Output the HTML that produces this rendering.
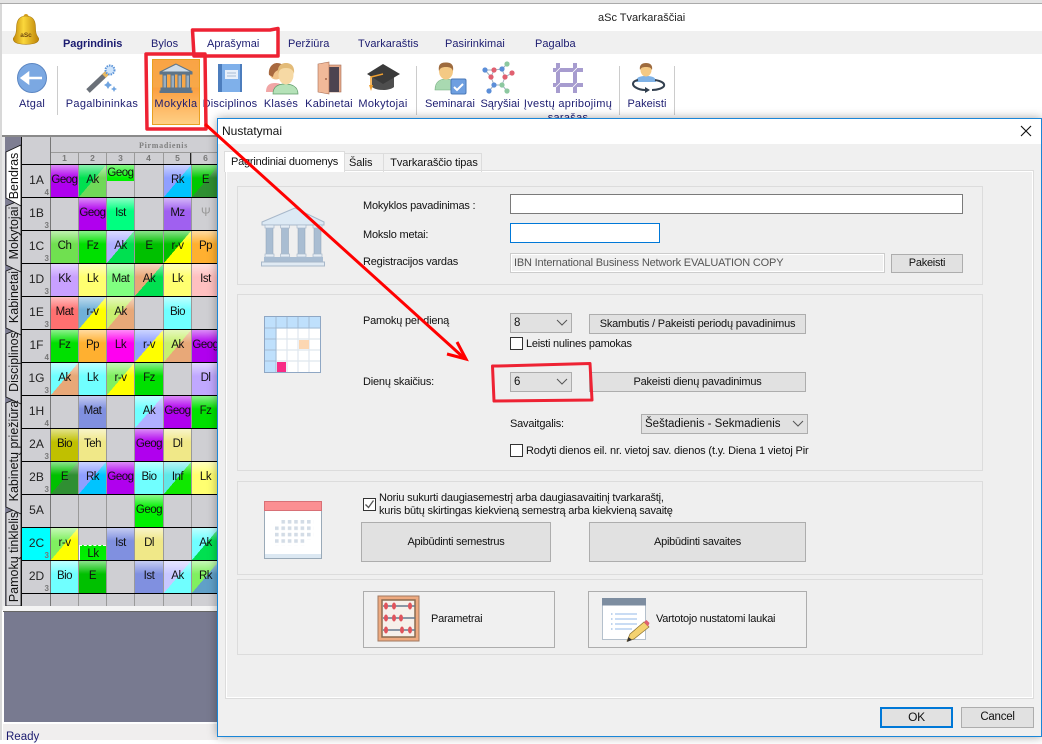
<!DOCTYPE html>
<html><head><meta charset="utf-8"><title>aSc Tvarkaraščiai</title>
<style>
html,body{margin:0;padding:0;width:1042px;height:740px;overflow:hidden;background:#fff;font-family:"Liberation Sans",sans-serif}
.a{position:absolute;white-space:nowrap}
.m{color:#1c1c70;font-size:11px;letter-spacing:.05px;line-height:14px;top:37px}
.t{color:#1c1c70;font-size:11px;letter-spacing:.2px;line-height:14px;top:97px;text-align:center}
.sep{position:absolute;top:66px;width:1px;height:49px;background:#ccc}
.r{position:absolute;left:22px;width:196px;height:33px;border-top:1px solid #000;box-sizing:border-box;display:flex}
.r>*{display:block;font-style:normal;height:32px;line-height:30px;text-align:center;font-size:11.5px;letter-spacing:-.5px;color:#111;width:27px;margin-left:1px;overflow:hidden;position:relative;flex:none}
.r>:nth-child(1){width:28px;margin-left:0;font-size:12px;letter-spacing:0;padding-left:1px;box-sizing:border-box;overflow:visible;color:#222}
.r>:nth-child(5){width:28px}
.c{--b:var(--a);background:linear-gradient(rgba(255,255,255,.55),rgba(255,255,255,0) 13px),linear-gradient(to bottom right,var(--a) 50%,var(--b) 50%)}
.h b{position:absolute;right:1px;bottom:0;font:bold 8px/9px "Liberation Sans",sans-serif;color:#777}
.vl{position:absolute;top:153px;height:453px;width:1px;background:#9a9a9a}
.n{position:absolute;top:153px;width:27px;text-align:center;font:bold 8.5px/11px "Liberation Sans",sans-serif;color:#777}
.l{font-size:11px;letter-spacing:-.2px;line-height:14px;color:#111}
.btn{position:absolute;box-sizing:border-box;background:#e1e1e1;border:1px solid #adadad;text-align:center;font-size:11px;letter-spacing:-.25px;color:#111;white-space:nowrap}
.cmb{position:absolute;box-sizing:border-box;background:#e1e1e1;border:1px solid #adadad;font-size:11.5px;color:#111;padding-left:3px;line-height:18px;height:20px;white-space:nowrap}
.cmb svg{position:absolute;right:3px;top:5px}
.cb{position:absolute;box-sizing:border-box;width:13px;height:13px;border:1px solid #333;background:#fff}
.grp{position:absolute;left:19px;box-sizing:border-box;width:746px;border:1px solid #dcdcdc}
.d{position:absolute}
</style></head><body>

<!-- window top -->
<div class="a" style="left:0;top:0;width:1042px;height:3px;background:#e4e4e4"></div>
<div class="a" style="left:0;top:3px;width:1042px;height:1px;background:#aaa"></div>
<div class="a" style="left:0;top:4px;width:2px;height:736px;background:#d8d8d8"></div>
<div class="a" style="left:598px;top:11px;font-size:11px;line-height:14px;color:#222">aSc Tvarkaraščiai</div>
<div class="a" style="left:2px;top:31px;width:1040px;height:23px;background:#f0f0f0"></div>
<div class="a" style="left:193px;top:31px;width:86px;height:23px;background:#fff"></div>

<!-- bell -->
<svg class="a" style="left:12px;top:13px" width="28" height="32" viewBox="0 0 28 32">
<defs><linearGradient id="bl" x1="0" x2="1" y1="0" y2="0"><stop offset="0" stop-color="#c48a08"/><stop offset=".4" stop-color="#fbd83c"/><stop offset="1" stop-color="#bd8206"/></linearGradient></defs>
<circle cx="14" cy="3.500" r="2.500" fill="#d8a020"/>
<path d="M14 3C6 3 4.500 9 4.500 15C4.500 21 3 23 1.500 25C.5 28 3 29.500 6 30.500C11 31.500 17 31.500 22 30.500C25 29.500 27.500 28 26.500 25C25 23 23.500 21 23.500 15C23.500 9 22 3 14 3Z" fill="url(#bl)" stroke="#a87a10" stroke-width=".6"/>
<text x="14" y="24" text-anchor="middle" font-family="Liberation Sans" font-size="6.500" font-weight="bold" fill="#704810">aSc</text>
</svg>

<!-- menu -->
<div class="a m" style="left:63px;font-weight:bold;letter-spacing:-.05px">Pagrindinis</div>
<div class="a m" style="left:151px">Bylos</div>
<div class="a m" style="left:207px">Aprašymai</div>
<div class="a m" style="left:288px">Peržiūra</div>
<div class="a m" style="left:358px">Tvarkaraštis</div>
<div class="a m" style="left:445px">Pasirinkimai</div>
<div class="a m" style="left:535px">Pagalba</div>

<!-- toolbar -->
<div class="sep" style="left:57px"></div>
<div class="sep" style="left:416px"></div>
<div class="sep" style="left:619px"></div>
<div class="sep" style="left:674px"></div>
<div class="a" style="left:152px;top:59px;width:48px;height:66px;box-sizing:border-box;border:1px solid #e8a020;background:linear-gradient(#f9a445 0,#f8a848 42%,#fb9f40 44%,#ffcf85 100%)"></div>

<svg class="a" style="left:0;top:54px" width="700" height="50" viewBox="0 54 700 50">
<!-- back -->
<circle cx="32" cy="78" r="14.500" fill="#7ba8e2" stroke="#5b86c2"/>
<path d="M22 78H42M22 78l6-4.500v9z" stroke="#fff" stroke-width="2.600" fill="#fff"/>
<!-- wand -->
<path d="M88 91L107 73" stroke="#6a7078" stroke-width="5"/>
<path d="M104 76L109 71" stroke="#e8b860" stroke-width="5"/>
<circle cx="110" cy="70" r="4.500" fill="#cfe4fa" stroke="#5c94d8" stroke-dasharray="1.500 1" stroke-width="2"/>
<path d="M108 85l1.500 2.500 2.500 1.500-2.500 1.500-1.500 2.500-1.500-2.500-2.500-1.500 2.500-1.500zM114 90l1 2 2 1-2 1-1 2-1-2-2-1 2-1z" fill="#6fa4e0" transform="translate(0 -4)"/>
<!-- temple orange -->
<g fill="#5e7488" stroke="#5e7488">
<path d="M176 64L160 72H192Z" fill="#cfdce8"/><rect x="160" y="72" width="32" height="2" />
<rect x="163" y="75" width="3.500" height="13" fill="#9aaec0"/><rect x="171" y="75" width="3.500" height="13" fill="#9aaec0"/><rect x="178" y="75" width="3.500" height="13" fill="#9aaec0"/><rect x="186" y="75" width="3.500" height="13" fill="#9aaec0"/>
<rect x="161" y="88" width="30" height="2"/><rect x="160" y="91" width="32" height="1.500"/>
</g>
<!-- book -->
<rect x="218" y="64" width="24" height="28" rx="1" fill="#7fb0ea"/><rect x="218" y="64" width="4" height="28" fill="#4c7dbd"/><rect x="240" y="64" width="2" height="28" fill="#4c7dbd"/>
<rect x="225" y="70" width="13" height="9" fill="#e8f0fa"/><path d="M227 73H236M227 76H236" stroke="#a8bcd4"/>
<!-- people -->
<path d="M266 92c0-7 4-9 9-9s9 2 9 9z" fill="#f1a6a6"/><circle cx="276" cy="73" r="6.500" fill="#f1c48a"/><path d="M269 75c-1-8 4-12 8-12 4 0 7 2 7 6-4 0-10 1-11 8z" fill="#a8693f"/>
<path d="M273 94c0-8 6-10 12-10s13 2 13 10z" fill="#b5e2b8" stroke="#5e9a68" stroke-width=".7"/><ellipse cx="286" cy="75" rx="7.500" ry="9.500" fill="#f6d9a4"/><path d="M278 74c-1-8 3-11 8-11s9 3 8 11c-1-4-3-6-8-6s-7 2-8 6z" fill="#e3bb78"/>
<!-- door -->
<rect x="319" y="65" width="22" height="27" fill="#e4a98a" stroke="#a86e55" stroke-width=".6"/><rect x="328" y="67" width="11" height="25" fill="#4d4450"/>
<path d="M318 64L329 62V94L318 92Z" fill="#f1b999" stroke="#a86e55" stroke-width=".6"/><circle cx="326" cy="79" r=".9" fill="#8c4a30"/>
<!-- cap -->
<path d="M372 75v12c5 4 17 4 22 0V75z" fill="#4e4e4e"/><path d="M383 64L400 74L383 84L367 74Z" fill="#3a3a3a"/><path d="M383 74L371 77V86" stroke="#f0a030" stroke-width="1.500" fill="none"/><path d="M369 85h4l-2 6z" fill="#f0a030"/>
<!-- seminar -->
<path d="M435 90c0-9 6-11 11-11s11 2 11 11z" fill="#a9d9b1" stroke="#70a97a" stroke-width=".6"/><ellipse cx="446" cy="71" rx="7" ry="8.500" fill="#f4c984"/><path d="M439 71c-1-7 2-8.500 7-8.500s8 2 7 8.500c-1-3-3-4-7-4s-6 1-7 4z" fill="#9e6b3e"/>
<rect x="451" y="79" width="15" height="15" rx="1.500" fill="#6e9fe0" stroke="#4a78b8"/><path d="M454 87l3 3 6-6" stroke="#fff" stroke-width="2" fill="none"/>
<!-- graph -->
<g stroke="#9fb0c0" stroke-width="1" fill="none"><path d="M485 70L494 70L502 69L507 64M502 69L505 77L512 73M494 70L491 77L494 85L502 85L505 77M494 85L489 91M502 85L507 91M491 77L485 70"/></g>
<circle cx="485" cy="70" r="2.600" fill="#5b8ed8"/><circle cx="494" cy="70" r="2.600" fill="#e06070"/><circle cx="502" cy="69" r="2.600" fill="#5b8ed8"/><circle cx="507" cy="64" r="2.600" fill="#8cc8a0"/><circle cx="512" cy="73" r="2.600" fill="#e06070"/><circle cx="491" cy="77" r="2.600" fill="#e06070"/><circle cx="505" cy="77" r="2.600" fill="#e06070"/><circle cx="494" cy="85" r="2.600" fill="#5b8ed8"/><circle cx="502" cy="85" r="2.600" fill="#8cc8a0"/><circle cx="489" cy="91" r="2.600" fill="#5b8ed8"/><circle cx="507" cy="91" r="2.600" fill="#8cc8a0"/>
<!-- hash -->
<path d="M558 63V93M575 63V93M553 70H583M553 85H583" stroke="#a79ccf" stroke-width="4"/>
<path d="M556 72l4-4M573 72l4-4M556 87l4-4M573 87l4-4" stroke="#fff" stroke-width=".8"/>
<!-- pakeisti -->
<path d="M636 82c0-5 4-6 10-6s10 1 10 6z" fill="#7fb2e6"/><ellipse cx="646" cy="70" rx="5.500" ry="6.500" fill="#f4c984"/><path d="M640 70c-1-5 2-7 6-7s7 2 6 7c-1-2-2-3-6-3s-5 1-6 3z" fill="#9e6b3e"/>
<path d="M638 80c-6 1-6 5-3 7 3 2 6 3 10 3M655 80c6 1 10 3 9 6-1 2-6 4-12 4" stroke="#33404f" stroke-width="2" fill="none"/><path d="M645 87l5 3-5 3z" fill="#33404f"/>
</svg>

<div class="a t" style="left:12px;width:40px">Atgal</div>
<div class="a t" style="left:62px;width:80px;letter-spacing:.3px">Pagalbininkas</div>
<div class="a t" style="left:150px;width:52px;letter-spacing:.4px">Mokykla</div>
<div class="a t" style="left:200px;width:60px">Disciplinos</div>
<div class="a t" style="left:262px;width:38px">Klasės</div>
<div class="a t" style="left:300px;width:58px">Kabinetai</div>
<div class="a t" style="left:354px;width:58px;letter-spacing:.3px">Mokytojai</div>
<div class="a t" style="left:420px;width:60px;letter-spacing:.05px">Seminarai</div>
<div class="a t" style="left:477px;width:46px;letter-spacing:0">Sąryšiai</div>
<div class="a t" style="left:518px;width:100px;letter-spacing:.3px">Įvestų apribojimų<br>sąrašas</div>
<div class="a t" style="left:622px;width:50px;letter-spacing:.05px">Pakeisti</div>

<!-- timetable -->
<div class="a" style="left:2px;top:135px;width:216px;height:2px;background:#8a8a8a"></div>
<div class="a" style="left:2px;top:137px;width:3px;height:473px;background:#e8e8e8"></div>
<div class="a" style="left:5px;top:137px;width:213px;height:469px;background:#cfcfd3"></div>
<div class="a" style="left:51px;top:152px;width:167px;height:1px;background:#9a9a9a"></div>
<div class="a" style="left:50px;top:137px;width:1px;height:16px;background:#8a8a8a"></div>
<div class="a" style="left:139px;top:141px;font:bold 8px/10px 'Liberation Serif',serif;letter-spacing:.7px;color:#808080">Pirmadienis</div>
<div class="vl" style="left:50px;top:138px;height:468px;background:#777"></div><div class="vl" style="left:78px"></div><div class="vl" style="left:106px"></div><div class="vl" style="left:134px"></div><div class="vl" style="left:163px"></div><div class="vl" style="left:191px"></div>
<div class="a" style="left:190px;top:153px;width:1px;height:11px;background:#222"></div>
<div class="n" style="left:51px">1</div><div class="n" style="left:79px">2</div><div class="n" style="left:107px">3</div><div class="n" style="left:135px">4</div><div class="n" style="left:164px">5</div><div class="n" style="left:192px">6</div>

<div class="r" style="top:164px"><i class="h">1A<b>4</b></i><i class="c" style="--a:#b000ee">Geog</i><i class="c" style="--a:#00e050;--b:#70d858">Ak</i><i class="c" style="--a:#00f000;height:16px;line-height:17px">Geog</i><i></i><i class="c" style="--a:#8f9fff;--b:#00c4ff">Rk</i><i class="c" style="--a:#00c800;--b:#2f8f32">E</i></div>
<div class="r" style="top:197px"><i class="h">1B<b>3</b></i><i></i><i class="c" style="--a:#b000ee">Geog</i><i class="c" style="--a:#00ff80">Ist</i><i></i><i class="c" style="--a:#a060f0">Mz</i><i style="color:#999">Ψ</i></div>
<div class="r" style="top:230px"><i class="h">1C<b>3</b></i><i class="c" style="--a:#70e050">Ch</i><i class="c" style="--a:#00e000">Fz</i><i class="c" style="--a:#b0b0ff;--b:#00e050">Ak</i><i class="c" style="--a:#00c000">E</i><i class="c" style="--a:#00c000;--b:#ffff00">r-v</i><i class="c" style="--a:#ffb030">Pp</i></div>
<div class="r" style="top:263px"><i class="h">1D<b>3</b></i><i class="c" style="--a:#c8a0ff">Kk</i><i class="c" style="--a:#ffff70">Lk</i><i class="c" style="--a:#80ff80">Mat</i><i class="c" style="--a:#e8a878;--b:#00e050">Ak</i><i class="c" style="--a:#ffff70">Lk</i><i class="c" style="--a:#ffc0c0">Ist</i></div>
<div class="r" style="top:296px"><i class="h">1E<b>3</b></i><i class="c" style="--a:#ff7070">Mat</i><i class="c" style="--a:#70b0d8;--b:#ffff00">r-v</i><i class="c" style="--a:#c8f070;--b:#e8a878">Ak</i><i></i><i class="c" style="--a:#70ffff">Bio</i><i></i></div>
<div class="r" style="top:329px"><i class="h">1F<b>4</b></i><i class="c" style="--a:#00e000">Fz</i><i class="c" style="--a:#ffb030">Pp</i><i class="c" style="--a:#ff00f0">Lk</i><i class="c" style="--a:#8f9fff;--b:#ffff00">r-v</i><i class="c" style="--a:#c8f070;--b:#e8a878">Ak</i><i class="c" style="--a:#b000ee">Geog</i></div>
<div class="r" style="top:362px"><i class="h">1G<b>3</b></i><i class="c" style="--a:#70ffff;--b:#e8a878">Ak</i><i class="c" style="--a:#70ffff">Lk</i><i class="c" style="--a:#80f060;--b:#ffff00">r-v</i><i class="c" style="--a:#00e000">Fz</i><i></i><i class="c" style="--a:#c0a8ff">Dl</i></div>
<div class="r" style="top:395px"><i class="h">1H<b>4</b></i><i></i><i class="c" style="--a:#8090e0">Mat</i><i></i><i class="c" style="--a:#70ffff;--b:#b0b0ff">Ak</i><i class="c" style="--a:#b000ee">Geog</i><i class="c" style="--a:#00e000">Fz</i></div>
<div class="r" style="top:428px"><i class="h">2A<b>3</b></i><i class="c" style="--a:#c0c000">Bio</i><i class="c" style="--a:#f0e888">Teh</i><i></i><i class="c" style="--a:#b000ee">Geog</i><i class="c" style="--a:#f0e888">Dl</i><i></i></div>
<div class="r" style="top:461px"><i class="h">2B<b>3</b></i><i class="c" style="--a:#00c000;--b:#2f8f32">E</i><i class="c" style="--a:#8f9fff;--b:#00c4ff">Rk</i><i class="c" style="--a:#b000ee">Geog</i><i class="c" style="--a:#70ffff">Bio</i><i class="c" style="--a:#60e8e8;--b:#10e800">Inf</i><i class="c" style="--a:#ffff70">Lk</i></div>
<div class="r" style="top:494px"><i class="h">5A</i><i></i><i></i><i></i><i class="c" style="--a:#00f000">Geog</i><i></i><i></i></div>
<div class="r" style="top:527px"><i class="h" style="background:#00ffff">2C<b>3</b></i><i class="c" style="--a:#80f060;--b:#ffff00">r-v</i><i style="margin-top:17px;height:15px;line-height:17px;background:linear-gradient(#00e800,#00f000);border-top:1px dashed #fff;border-left:1px solid #fff;box-sizing:border-box">Lk</i><i class="c" style="--a:#8090e0">Ist</i><i class="c" style="--a:#f0e888">Dl</i><i></i><i class="c" style="--a:#70ffff;--b:#00e050">Ak</i></div>
<div class="r" style="top:560px"><i class="h">2D<b>3</b></i><i class="c" style="--a:#70ffff">Bio</i><i class="c" style="--a:#00c000">E</i><i></i><i class="c" style="--a:#8090e0">Ist</i><i class="c" style="--a:#c8c8ff;--b:#70ffff">Ak</i><i class="c" style="--a:#80f060;--b:#60a0c8">Rk</i></div>
<div class="r" style="top:593px;height:1px"></div>

<!-- side tabs -->
<svg class="a" style="left:5px;top:137px" width="17" height="469" viewBox="5 137 17 469">
<rect x="5" y="137" width="17" height="469" fill="#7e7e92"/>
<g fill="#d4d4d8" stroke="#111" stroke-width=".8">
<path d="M21 507L6 513V606H21Z"/>
<path d="M21 397L6 403V507L21 514Z"/>
<path d="M21 328L6 334V397L21 404Z"/>
<path d="M21 265L6 271V328L21 335Z"/>
<path d="M21 200L6 206V265L21 272Z"/>
<path d="M21 145L6 152V198L21 206Z" fill="#fff"/>
</g>
<g font-family="Liberation Sans" font-size="12.500" fill="#111" text-anchor="middle">
<text transform="translate(18 176) rotate(-90)">Bendras</text>
<text transform="translate(18 233) rotate(-90)">Mokytojai</text>
<text transform="translate(18 297) rotate(-90)">Kabinetai</text>
<text transform="translate(18 362) rotate(-90)">Disciplinos</text>
<text transform="translate(18 451) rotate(-90)">Kabinetų priežiūra</text>
<text transform="translate(18 557) rotate(-90)">Pamokų tinklelis</text>
</g>
<rect x="21" y="137" width="1" height="469" fill="#111"/>
</svg>

<!-- lower -->
<div class="a" style="left:3px;top:606px;width:215px;height:5px;background:#f4f4f4"></div>
<div class="a" style="left:3px;top:611px;width:215px;height:1px;background:#666"></div>
<div class="a" style="left:4px;top:612px;width:214px;height:110px;background:#787a90"></div>
<div class="a" style="left:3px;top:722px;width:215px;height:2px;background:#fff"></div>
<div class="a" style="left:3px;top:724px;width:215px;height:16px;background:#f0eeee"></div>
<div class="a" style="left:6px;top:730px;font-size:11.5px;line-height:14px;color:#1c1c70">Ready</div>

<!-- dialog -->
<div class="a" style="left:217px;top:118px;width:825px;height:619px;box-sizing:border-box;border:1px solid #1a86d8;background:#f0f0f0;box-shadow:0 0 9px rgba(0,0,0,.35);overflow:hidden">
 <div class="d" style="left:0;top:0;width:823px;height:25px;background:#fff"></div>
 <div class="d" style="left:4px;top:5px;font-size:12px;line-height:14px;color:#111">Nustatymai</div>
 <svg class="d" style="left:802px;top:6px" width="12" height="12"><path d="M1 1L11 11M11 1L1 11" stroke="#111" stroke-width="1.100"/></svg>
 <div class="d" style="left:8px;top:52px;width:807px;height:527px;box-sizing:border-box;border:1px solid #fff;outline:1px solid #dcdcdc;outline-offset:0;background:#efefef"></div>
 <div class="d" style="left:6px;top:32px;width:121px;height:21px;box-sizing:border-box;border:1px solid #dcdcdc;border-bottom:0;background:#fff;font-size:11px;letter-spacing:-.2px;line-height:20px;text-align:center;color:#111">Pagrindiniai duomenys</div>
 <div class="d" style="left:127px;top:34px;width:39px;height:19px;box-sizing:border-box;border:1px solid #dcdcdc;border-left:0;border-bottom:0;font-size:11px;letter-spacing:-.1px;line-height:19px;padding-left:4px;color:#111">Šalis</div>
 <div class="d" style="left:166px;top:34px;width:98px;height:19px;box-sizing:border-box;border:1px solid #dcdcdc;border-left:0;border-bottom:0;font-size:11px;letter-spacing:-.1px;line-height:19px;text-align:center;padding-left:3px;color:#111">Tvarkaraščio tipas</div>

 <div class="grp" style="top:67px;height:99px"></div>
 <div class="grp" style="top:175px;height:177px"></div>
 <div class="grp" style="top:362px;height:94px"></div>
 <div class="grp" style="top:460px;height:76px"></div>

 <div class="d l" style="left:145px;top:80px">Mokyklos pavadinimas :</div>
 <div class="d l" style="left:145px;top:109px">Mokslo metai:</div>
 <div class="d l" style="left:145px;top:136px">Registracijos vardas</div>
 <div class="d" style="left:292px;top:75px;width:453px;height:20px;box-sizing:border-box;border:1px solid #7a7a7a;background:#fff"></div>
 <div class="d" style="left:292px;top:104px;width:150px;height:20px;box-sizing:border-box;border:1px solid #0078d7;background:#fff"></div>
 <div class="d l" style="left:292px;top:134px;width:375px;height:20px;box-sizing:border-box;border:1px solid #ccc;outline:1px solid #fff;outline-offset:-2px;background:#f0f0f0;line-height:18px;padding-left:3px;color:#555;letter-spacing:-.18px">IBN International Business Network EVALUATION COPY</div>
 <div class="btn" style="left:673px;top:135px;width:72px;height:19px;line-height:17px">Pakeisti</div>

 <div class="d l" style="left:145px;top:195px">Pamokų per dieną</div>
 <div class="d l" style="left:145px;top:256px">Dienų skaičius:</div>
 <div class="cmb" style="left:292px;top:194px;width:62px">8<svg width="12" height="8"><path d="M1 1l5 5 5-5" stroke="#555" fill="none"/></svg></div>
 <div class="btn" style="left:371px;top:195px;width:217px;height:20px;line-height:18px;letter-spacing:-.2px">Skambutis / Pakeisti periodų pavadinimus</div>
 <div class="cb" style="left:292px;top:218px"></div>
 <div class="d l" style="left:308px;top:218px;letter-spacing:-.25px">Leisti nulines pamokas</div>
 <div class="cmb" style="left:292px;top:253px;width:62px">6<svg width="12" height="8"><path d="M1 1l5 5 5-5" stroke="#555" fill="none"/></svg></div>
 <div class="btn" style="left:371px;top:253px;width:217px;height:20px;line-height:18px;letter-spacing:-.2px">Pakeisti dienų pavadinimus</div>
 <div class="d l" style="left:292px;top:298px">Savaitgalis:</div>
 <div class="cmb" style="left:423px;top:295px;width:167px">Šeštadienis - Sekmadienis<svg width="12" height="8"><path d="M1 1l5 5 5-5" stroke="#555" fill="none"/></svg></div>
 <div class="cb" style="left:292px;top:325px"></div>
 <div class="d l" style="left:308px;top:325px;width:283px;overflow:hidden;letter-spacing:-.15px;white-space:nowrap">Rodyti dienos eil. nr. vietoj sav. dienos (t.y. Diena 1 vietoj Pirmadienis)</div>

 <div class="cb" style="left:145px;top:379px;border-color:#333"><svg width="11" height="11" style="display:block"><path d="M1.500 5.500l3 3 5-7" stroke="#555" stroke-width="1.300" fill="none"/></svg></div>
 <div class="d l" style="left:161px;top:373px;line-height:12.500px;letter-spacing:-.2px">Noriu sukurti daugiasemestrį arba daugiasavaitinį tvarkaraštį,<br>kuris būtų skirtingas kiekvieną semestrą arba kiekvieną savaitę</div>
 <div class="btn" style="left:143px;top:403px;width:190px;height:40px;line-height:38px">Apibūdinti semestrus</div>
 <div class="btn" style="left:371px;top:403px;width:217px;height:40px;line-height:38px">Apibūdinti savaites</div>
 <div class="btn" style="left:145px;top:472px;width:192px;height:57px;background:#f0f0f0;text-align:left;padding-left:67px;line-height:55px">Parametrai</div>
 <div class="btn" style="left:370px;top:472px;width:219px;height:57px;background:#f0f0f0;text-align:left;padding-left:67px;line-height:55px">Vartotojo nustatomi laukai</div>
 <div class="btn" style="left:662px;top:588px;width:73px;height:21px;border:2px solid #0078d7;line-height:17px;font-size:12px">OK</div>
 <div class="btn" style="left:743px;top:588px;width:73px;height:21px;line-height:19px;font-size:11.5px">Cancel</div>
</div>

<!-- dialog icons -->
<svg class="a" style="left:0;top:0;pointer-events:none" width="1042" height="740" viewBox="0 0 1042 740">
<!-- temple -->
<path d="M295 208L262 222V225H324V222Z" fill="#dce9f4" stroke="#a8b8ca"/>
<g fill="#a9bdd2" stroke="#8ba0b6" stroke-width=".5">
<rect x="266" y="227" width="7" height="29"/><rect x="281.500" y="227" width="7" height="29"/><rect x="298" y="227" width="7" height="29"/><rect x="314" y="227" width="7" height="29"/>
</g>
<g fill="#e4edf5" stroke="#a8b8ca" stroke-width=".7">
<rect x="265" y="225" width="9" height="3"/><rect x="280.500" y="225" width="9" height="3"/><rect x="297" y="225" width="9" height="3"/><rect x="313" y="225" width="9" height="3"/>
<rect x="265" y="254" width="9" height="3"/><rect x="280.500" y="254" width="9" height="3"/><rect x="297" y="254" width="9" height="3"/><rect x="313" y="254" width="9" height="3"/>
</g>
<rect x="264" y="257" width="59" height="5" fill="#a9bdd2"/><rect x="261.500" y="262" width="63" height="4" fill="#e0eaf3" stroke="#a8b8ca"/>

<!-- grid icon -->
<rect x="264.500" y="316.500" width="56" height="56" fill="#fff" stroke="#8fa7c4"/>
<rect x="265" y="317" width="55" height="11" fill="#bfe0fc"/><rect x="265" y="317" width="11" height="55" fill="#bfe0fc"/>
<path d="M276 317V372M287 317V372M298 317V372M309 317V372M265 328H320M265 339H320M265 350H320M265 361H320" stroke="#dfe7ee" stroke-width="1.200"/>
<path d="M276 317V328M287 317V328M298 317V328M309 317V328M265 328H276M265 339H276M265 350H276M265 361H276M276 328V372M265 328H320" stroke="#9dbad6" stroke-width="1"/>
<rect x="299" y="340" width="10" height="9" fill="#fcd7b2"/><rect x="277" y="362" width="9" height="10" fill="#f82b85"/>

<!-- calendar -->
<rect x="264.500" y="501.500" width="57" height="57" fill="#fff" stroke="#9aaab8"/>
<rect x="264.500" y="501.500" width="57" height="9" fill="#fb8f92" stroke="#d87076"/>
<rect x="265" y="554" width="56" height="4" fill="#dce8f2"/>
<defs><pattern id="dt" x="275" y="520" width="6.400" height="6.400" patternUnits="userSpaceOnUse"><rect x="0" y="0" width="3.600" height="3.600" fill="#d3dce6"/></pattern></defs>
<rect x="281.400" y="520" width="32" height="6.400" fill="url(#dt)"/><rect x="275" y="526.400" width="38.400" height="12.800" fill="url(#dt)"/><rect x="275" y="539.200" width="32" height="6.400" fill="url(#dt)"/>

<!-- abacus -->
<rect x="378" y="596" width="41" height="45" fill="#eeaa80" stroke="#a07860" />
<rect x="382" y="600" width="33" height="37" fill="#f6f0ea" stroke="#8a6a50" stroke-width="1.500"/>
<path d="M383 606H415M383 618H415M383 630H415" stroke="#66788c" stroke-width="1.500"/>
<g fill="#e0545c"><ellipse cx="386" cy="606" rx="2" ry="3.500"/><ellipse cx="394" cy="606" rx="2" ry="3.500"/><ellipse cx="410" cy="606" rx="2" ry="3.500"/><ellipse cx="386" cy="618" rx="2" ry="3.500"/><ellipse cx="394" cy="618" rx="2" ry="3.500"/><ellipse cx="401" cy="618" rx="2" ry="3.500"/><ellipse cx="386" cy="630" rx="2" ry="3.500"/><ellipse cx="402" cy="630" rx="2" ry="3.500"/><ellipse cx="410" cy="630" rx="2" ry="3.500"/></g>

<!-- list icon -->
<rect x="602.500" y="598.500" width="43" height="41" fill="#fff" stroke="#b4c0cc"/>
<rect x="602" y="598" width="44" height="7.500" fill="#7d8da0"/>
<path d="M615 614H637M615 619H637M615 624H637M615 629H632" stroke="#a9c8ee" stroke-width="1.300"/>
<path d="M611 614h1.500M611 619h1.500M611 624h1.500M611 629h1.500" stroke="#7fa8dc"/>
<path d="M627 641L630 634L644 622L649 627L634 639Z" fill="#f4d270" stroke="#8a7030" stroke-width=".7"/>
<path d="M627 642L628.500 637L632 640Z" fill="#333"/><path d="M644 622l2.500-2 3 3-1.500 3.500z" fill="#e06070"/>

<!-- red annotations -->
<g fill="none" stroke="#ee2233" stroke-width="3" stroke-linejoin="round" stroke-linecap="round">
<path d="M193 30H270L278 28.500V56H194L192.500 30" stroke-width="3.500"/>
<path d="M146 54H205L206 129H147Z" stroke-width="3.500"/>
<path d="M498 366L590 363.500L592 400L494 401L492.500 366Z" stroke-width="3"/>
</g>
<path d="M205 124L464 358" stroke="#f00" stroke-width="3" fill="none"/>
<path d="M457 342L466 359L447 354" stroke="#f00" stroke-width="3" fill="none"/>
</svg>
</body></html>
